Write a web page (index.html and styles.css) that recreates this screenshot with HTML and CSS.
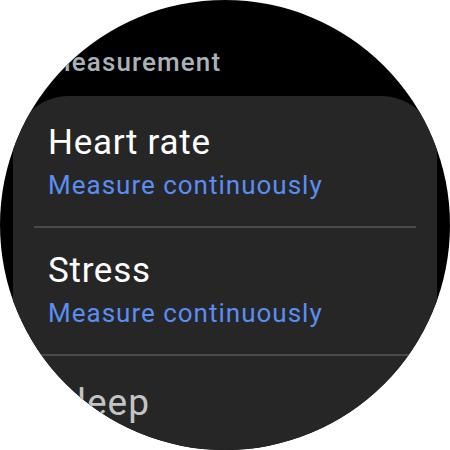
FILE: index.html
```html
<!DOCTYPE html>
<html>
<head>
<meta charset="utf-8">
<link rel="stylesheet" href="styles.css">
</head>
<body>
<div class="watch">
  <div class="header">Measurement</div>
  <div class="card">
    <div class="row">
      <div class="label">Heart rate</div>
      <div class="value">Measure continuously</div>
    </div>
    <div class="divider"></div>
    <div class="row">
      <div class="label">Stress</div>
      <div class="value">Measure continuously</div>
    </div>
    <div class="divider"></div>
    <div class="row row-faded">
      <div class="label">Sleep</div>
    </div>
  </div>
</div>
</body>
</html>
```
FILE: styles.css
```css
html, body {
  margin: 0;
  padding: 0;
  background: #ffffff;
}
.watch {
  width: 450px;
  height: 450px;
  border-radius: 50%;
  overflow: hidden;
  background: #000000;
  font-family: Roboto, "Noto Sans", sans-serif;
}
.header {
  padding: 46px 0 0 48px;
  height: 96px;
  box-sizing: border-box;
  font-size: 26px;
  line-height: 32px;
  font-weight: 500;
  letter-spacing: 1.1px;
  color: #a9b1b9;
}
.card {
  margin: 0 13px;
  padding-top: 4px;
  background: #262626;
  border-radius: 56px 56px 0 0;
  height: 400px;
}
.row {
  padding: 23px 30px 25px 35px;
}
.label {
  font-size: 35px;
  line-height: 40px;
  letter-spacing: 0.7px;
  color: #ffffff;
}
.value {
  margin-top: 6px;
  font-size: 26px;
  line-height: 32px;
  letter-spacing: 1px;
  color: #5a8ef2;
}
.divider {
  height: 2px;
  margin: 0 21px;
  background: #4a4a4a;
}
.row-faded {
  padding-top: 27px;
}
.row-faded .label {
  color: #c4c4c4;
  font-size: 37px;
  letter-spacing: 1px;
  padding-left: 6px;
}
```
